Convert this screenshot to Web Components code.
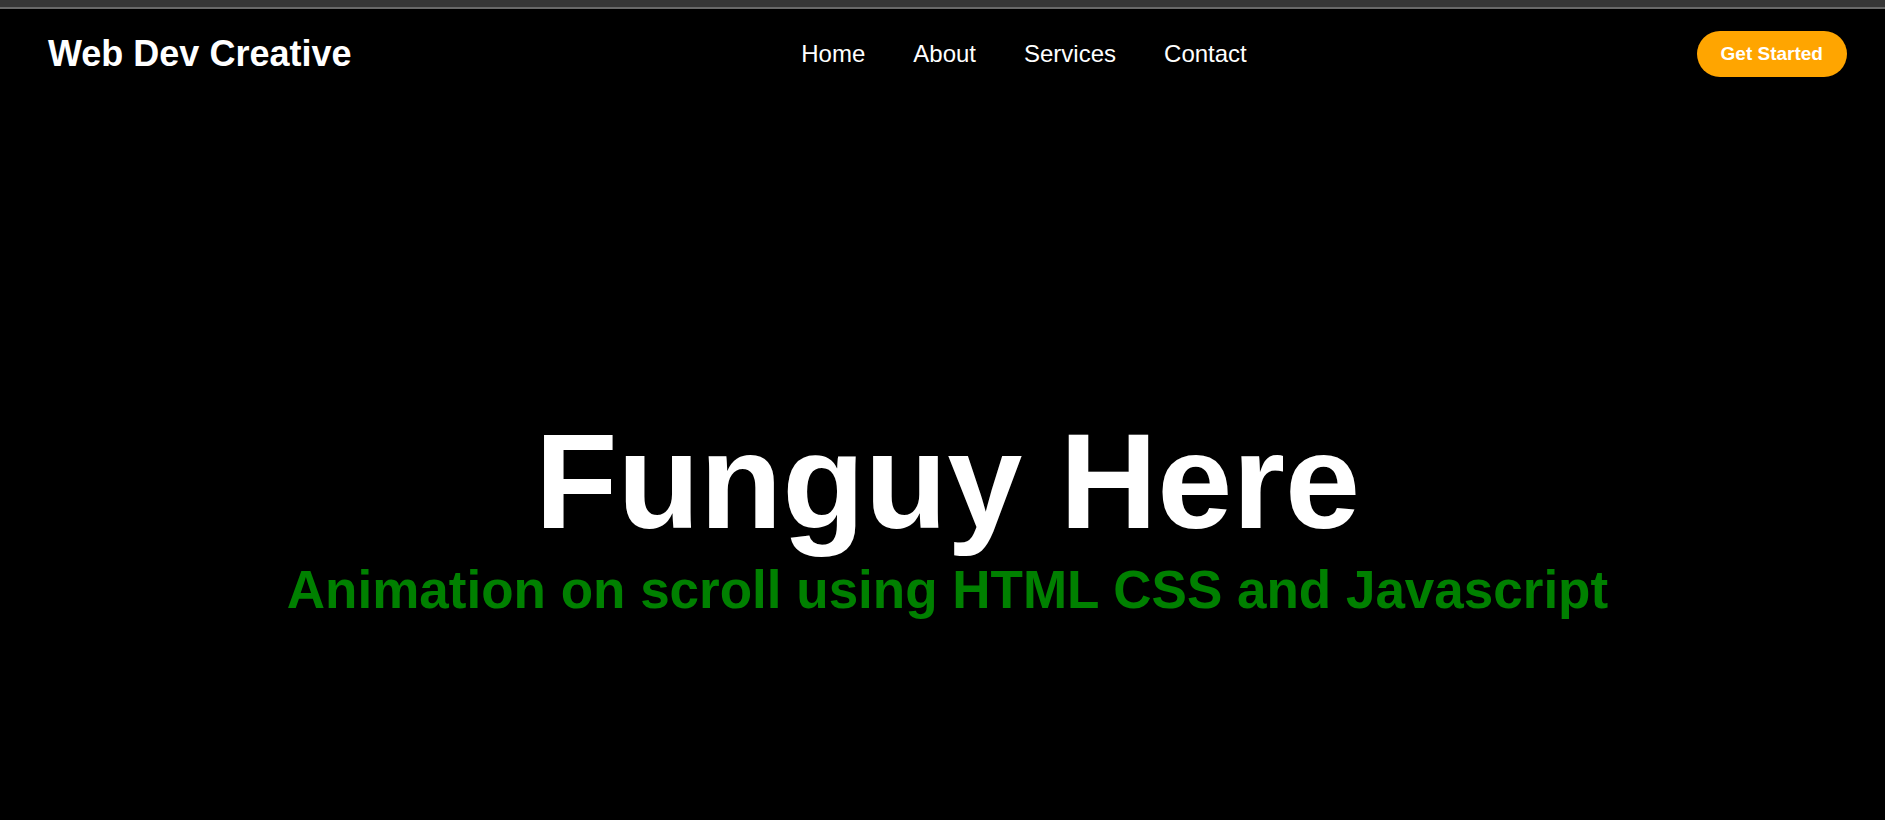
<!DOCTYPE html>
<html lang="en">
<head>
<meta charset="utf-8">
<title>Web Dev Creative</title>
<style>
html, body { margin: 0; height: 100%; background: #000; }
body { font-family: "Liberation Sans", Arial, sans-serif; color: #fff; }
</style>
</head>
<body>
<landing-page>
  <site-header slot="header">
    <nav-link href="#home">Home</nav-link>
    <nav-link href="#about">About</nav-link>
    <nav-link href="#services">Services</nav-link>
    <nav-link href="#contact">Contact</nav-link>
    <pill-button slot="action">Get Started</pill-button>
  </site-header>
  <hero-banner>
    <span slot="title">Funguy Here</span>
    <span slot="subtitle">Animation on scroll using HTML CSS and Javascript</span>
  </hero-banner>
</landing-page>
<script>
const define = (name, html, setup) => customElements.define(name, class extends HTMLElement {
  constructor() {
    super();
    this.attachShadow({ mode: "open" }).innerHTML = html;
  }
  connectedCallback() { if (setup) setup(this); }
});

define("landing-page", `
<style>
:host { display: flex; flex-direction: column; min-height: 100vh; }
.strip { height: 7px; background: #373737; border-bottom: 2px solid #6a6a6a; }
main { flex: 1; display: flex; flex-direction: column; }
</style>
<div class="strip"></div>
<slot name="header"></slot>
<main><slot></slot></main>`);

define("site-header", `
<style>
:host { display: block; }
header { display: flex; justify-content: space-between; align-items: center; padding: 22px 38px 22px 48px; }
.brand { color: inherit; text-decoration: none; font-size: 36px; font-weight: bold; line-height: 46px; }
nav { display: flex; gap: 48px; }
</style>
<header>
  <a class="brand" href="#home">Web Dev Creative</a>
  <nav><slot></slot></nav>
  <slot name="action"></slot>
</header>`);

define("nav-link", `
<style>
:host { display: block; }
a { color: inherit; text-decoration: none; font-size: 24px; line-height: 28px; }
</style>
<a><slot></slot></a>`, el => {
  el.shadowRoot.querySelector("a").href = el.getAttribute("href");
});

define("pill-button", `
<style>
:host { display: block; }
button { display: block; border: 0; border-radius: 24px; padding: 12px 24px; background: orange; color: #fff; font: bold 19px/22px "Liberation Sans", Arial, sans-serif; cursor: pointer; }
</style>
<button type="button"><slot></slot></button>`);

define("hero-banner", `
<style>
:host { flex: 1; display: flex; flex-direction: column; align-items: center; justify-content: center; text-align: center; padding: 108px 0 0 10px; }
h1, h2 { margin: 0; font-weight: bold; }
h1 { font-size: 135px; line-height: 152px; }
h2 { font-size: 53px; line-height: 64px; color: green; }
</style>
<h1><slot name="title"></slot></h1>
<h2><slot name="subtitle"></slot></h2>`);
</script>
</body>
</html>
